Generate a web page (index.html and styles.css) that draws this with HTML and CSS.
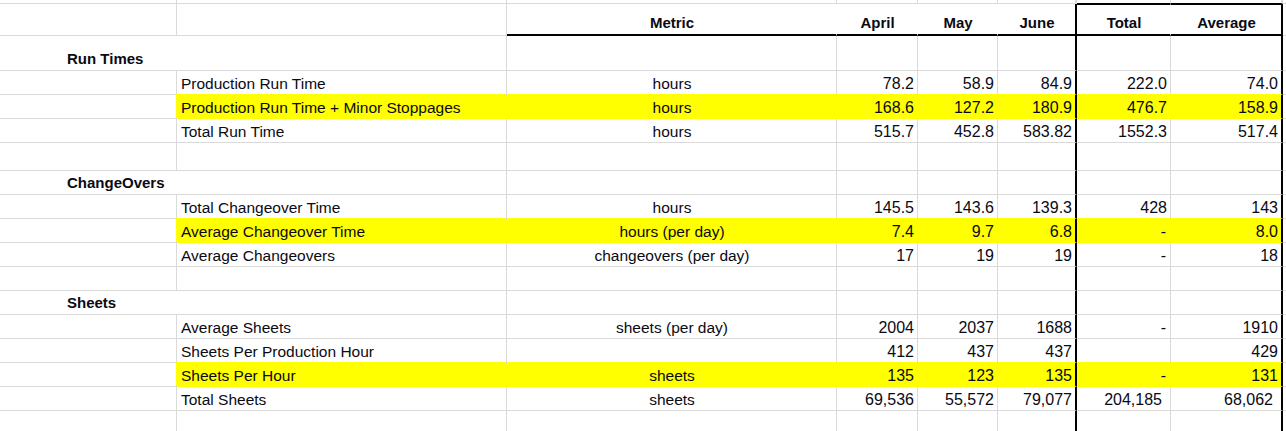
FILE: index.html
```html
<!DOCTYPE html>
<html lang="en">
<head>
<meta charset="utf-8">
<title>Production Metrics</title>
<link rel="stylesheet" href="styles.css">
</head>
<body>
<div class="sheet">
  <div class="row r0">
    <div class="c"></div><div class="c"></div><div class="c"></div><div class="c"></div><div class="c"></div><div class="c fr0"></div><div class="c boxtop"></div><div class="c boxtop hr0"></div><div class="c"></div>
  </div>
  <div class="row hdr">
    <div class="c"></div><div class="c"></div>
    <div class="c h ctr hb hw">Metric</div>
    <div class="c h ctr hb hw">April</div>
    <div class="c h ctr hb hw">May</div>
    <div class="c h ctr hb fr">June</div>
    <div class="c h ctr hb hw bt">Total</div>
    <div class="c h ctr hb hr bt">Average</div>
    <div class="c"></div>
  </div>

  <div class="row tall">
    <div class="c sec">Run Times</div>
    <div class="c"></div><div class="c"></div><div class="c"></div><div class="c fr"></div><div class="c"></div><div class="c hr"></div><div class="c"></div>
  </div>
  <div class="row">
    <div class="c"></div><div class="c">Production Run Time</div><div class="c ctr">hours</div>
    <div class="c num">78.2</div><div class="c num">58.9</div><div class="c num fr">84.9</div><div class="c num">222.0</div><div class="c num hr">74.0</div><div class="c"></div>
  </div>
  <div class="row hl">
    <div class="c"></div><div class="c y yb">Production Run Time + Minor Stoppages</div><div class="c ctr y">hours</div>
    <div class="c num y">168.6</div><div class="c num y">127.2</div><div class="c num fr y yf">180.9</div><div class="c num y">476.7</div><div class="c num hr y yf">158.9</div><div class="c"></div>
  </div>
  <div class="row">
    <div class="c"></div><div class="c">Total Run Time</div><div class="c ctr">hours</div>
    <div class="c num">515.7</div><div class="c num">452.8</div><div class="c num fr">583.82</div><div class="c num">1552.3</div><div class="c num hr">517.4</div><div class="c"></div>
  </div>
  <div class="row gap">
    <div class="c"></div><div class="c"></div><div class="c"></div><div class="c"></div><div class="c"></div><div class="c fr"></div><div class="c"></div><div class="c hr"></div><div class="c"></div>
  </div>

  <div class="row">
    <div class="c sec">ChangeOvers</div>
    <div class="c"></div><div class="c"></div><div class="c"></div><div class="c fr"></div><div class="c"></div><div class="c hr"></div><div class="c"></div>
  </div>
  <div class="row">
    <div class="c"></div><div class="c">Total Changeover Time</div><div class="c ctr">hours</div>
    <div class="c num">145.5</div><div class="c num">143.6</div><div class="c num fr">139.3</div><div class="c num">428</div><div class="c num hr">143</div><div class="c"></div>
  </div>
  <div class="row hl">
    <div class="c"></div><div class="c y yb">Average Changeover Time</div><div class="c ctr y">hours (per day)</div>
    <div class="c num y">7.4</div><div class="c num y">9.7</div><div class="c num fr y yf">6.8</div><div class="c num dash y">-</div><div class="c num hr y yf">8.0</div><div class="c"></div>
  </div>
  <div class="row">
    <div class="c"></div><div class="c">Average Changeovers</div><div class="c ctr">changeovers (per day)</div>
    <div class="c num">17</div><div class="c num">19</div><div class="c num fr">19</div><div class="c num dash">-</div><div class="c num hr">18</div><div class="c"></div>
  </div>
  <div class="row">
    <div class="c"></div><div class="c"></div><div class="c"></div><div class="c"></div><div class="c"></div><div class="c fr"></div><div class="c"></div><div class="c hr"></div><div class="c"></div>
  </div>

  <div class="row">
    <div class="c sec">Sheets</div>
    <div class="c"></div><div class="c"></div><div class="c"></div><div class="c fr"></div><div class="c"></div><div class="c hr"></div><div class="c"></div>
  </div>
  <div class="row">
    <div class="c"></div><div class="c">Average Sheets</div><div class="c ctr">sheets (per day)</div>
    <div class="c num">2004</div><div class="c num">2037</div><div class="c num fr">1688</div><div class="c num dash">-</div><div class="c num hr">1910</div><div class="c"></div>
  </div>
  <div class="row">
    <div class="c"></div><div class="c">Sheets Per Production Hour</div><div class="c ctr"></div>
    <div class="c num">412</div><div class="c num">437</div><div class="c num fr">437</div><div class="c num"></div><div class="c num hr">429</div><div class="c"></div>
  </div>
  <div class="row hl">
    <div class="c"></div><div class="c y yb">Sheets Per Hour</div><div class="c ctr y">sheets</div>
    <div class="c num y">135</div><div class="c num y">123</div><div class="c num fr y yf">135</div><div class="c num dash y">-</div><div class="c num hr y yf">131</div><div class="c"></div>
  </div>
  <div class="row">
    <div class="c"></div><div class="c">Total Sheets</div><div class="c ctr">sheets</div>
    <div class="c num">69,536</div><div class="c num">55,572</div><div class="c num fr">79,077</div><div class="c num acct">204,185</div><div class="c num hr acct">68,062</div><div class="c"></div>
  </div>
  <div class="row">
    <div class="c"></div><div class="c"></div><div class="c"></div><div class="c"></div><div class="c"></div><div class="c fr"></div><div class="c"></div><div class="c hr"></div><div class="c"></div>
  </div>
</div>
</body>
</html>
```

FILE: styles.css
```css
* {
  box-sizing: border-box;
  margin: 0;
  padding: 0;
}

html, body {
  background: #ffffff;
  overflow: hidden;
}

body {
  width: 1286px;
  height: 431px;
  font-family: "Liberation Sans", Arial, sans-serif;
  color: #000000;
}

.sheet {
  display: flex;
  flex-direction: column;
}

.row {
  display: grid;
  grid-template-columns: 177px 330px 330px 81px 80px 79px 94px 112px 60px;
  height: 24px;
  flex: none;
}

.r0 { height: 4px; }
.hdr { height: 32px; }
.tall { height: 35px; }
.gap { height: 28px; }

.c {
  display: flex;
  align-items: flex-end;
  padding: 0 3px 1px 4px;
  border-right: 1px solid #dadada;
  border-bottom: 1px solid #dadada;
  font-size: 15.5px;
  line-height: 18px;
  white-space: nowrap;
  overflow: visible;
  color: #0a0a14;
}

/* section label spans columns A and B */
.sec {
  grid-column: span 2;
  padding-left: 67px;
  padding-bottom: 2px;
  font-weight: bold;
  font-size: 15px;
}

.ctr { justify-content: center; }

.num {
  justify-content: flex-end;
  font-size: 16px;
  padding-right: 3px;
}

.dash { padding-right: 4px; }
.acct { padding-right: 8px; }

/* header */
.h {
  font-weight: bold;
  font-size: 15px;
  padding-bottom: 2px;
}
.hb { border-bottom: 2px solid #000000; }
.hw { border-right-color: #ffffff; }
.boxtop { border-bottom-color: #000000; }
.bt { border-top: 1px solid #000000; }

/* thick outline around Total / Average */
.fr { border-right: 2px solid #000000; }
.hr { border-right: 2px solid #000000; }
.fr0 { border-right: 2px solid #dadada; }
.hr0 { border-right: 2px solid #dadada; }

/* yellow highlighted rows */
.y {
  background: #ffff00;
  border-bottom-color: #ffff00;
  border-right-color: #ffff00;
  box-shadow: 0 -1px 0 #ffff00;
}
.y.fr, .y.hr { border-right-color: #000000; }
.y.yb { box-shadow: -1px -1px 0 #ffff00; }
.y.yf { box-shadow: -2px -1px 0 #ffff00; }
```
